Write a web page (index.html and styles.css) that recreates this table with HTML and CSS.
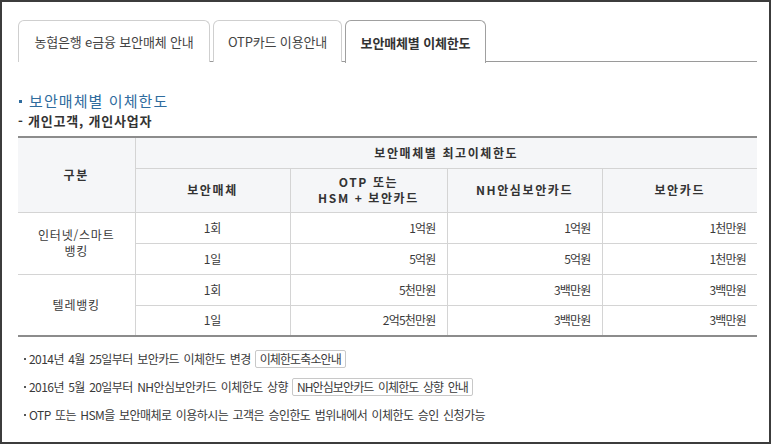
FILE: index.html
```html
<!DOCTYPE html>
<html lang="ko">
<head>
<meta charset="utf-8">
<title>보안매체별 이체한도</title>
<link rel="stylesheet" href="styles.css">
</head>
<body>
<div class="frame">
  <ul class="tabs">
    <li class="tab tab-1">농협은행 e금융 보안매체 안내</li>
    <li class="tab tab-2">OTP카드 이용안내</li>
    <li class="tab tab-3 active">보안매체별 이체한도</li>
  </ul>

  <h2 class="title"><span class="dot"></span>보안매체별 이체한도</h2>
  <p class="sub">- 개인고객, 개인사업자</p>

  <table class="limit">
    <colgroup>
      <col class="c1"><col class="c2"><col class="c3"><col class="c4"><col class="c5">
    </colgroup>
    <thead>
      <tr class="h1">
        <th rowspan="2">구분</th>
        <th colspan="4">보안매체별 최고이체한도</th>
      </tr>
      <tr class="h2">
        <th>보안매체</th>
        <th>OTP 또는<br>HSM + 보안카드</th>
        <th>NH안심보안카드</th>
        <th>보안카드</th>
      </tr>
    </thead>
    <tbody>
      <tr>
        <td rowspan="2" class="cat">인터넷/스마트<br>뱅킹</td>
        <td class="mid">1회</td><td class="num">1억원</td><td class="num">1억원</td><td class="num">1천만원</td>
      </tr>
      <tr>
        <td class="mid">1일</td><td class="num">5억원</td><td class="num">5억원</td><td class="num">1천만원</td>
      </tr>
      <tr>
        <td rowspan="2" class="cat">텔레뱅킹</td>
        <td class="mid">1회</td><td class="num">5천만원</td><td class="num">3백만원</td><td class="num">3백만원</td>
      </tr>
      <tr>
        <td class="mid">1일</td><td class="num">2억5천만원</td><td class="num">3백만원</td><td class="num">3백만원</td>
      </tr>
    </tbody>
  </table>

  <ul class="notes">
    <li>2014년 4월 25일부터 보안카드 이체한도 변경 <span class="btn">이체한도축소안내</span></li>
    <li>2016년 5월 20일부터 NH안심보안카드 이체한도 상향 <span class="btn">NH안심보안카드 이체한도 상향 안내</span></li>
    <li>OTP 또는 HSM을 보안매체로 이용하시는 고객은 승인한도 범위내에서 이체한도 승인 신청가능</li>
  </ul>
</div>
</body>
</html>
```

FILE: styles.css
```css
* { box-sizing: border-box; }
html, body { margin: 0; padding: 0; background: #fff; }
body {
  font-family: "Noto Sans CJK KR", "Noto Sans", sans-serif;
  color: #333;
  font-size: 12px;
}
.frame {
  width: 771px;
  height: 444px;
  border: 2px solid #3c3c3c;
  padding: 18px 12px 0 16px;
  overflow: hidden;
}
.tabs {
  list-style: none;
  margin: 0;
  padding: 0;
  display: flex;
  gap: 3px;
  border-bottom: 1px solid #9a9a9a;
  height: 42px;
}
.tab {
  height: 42px;
  border: 1px solid #cfcfcf;
  border-bottom: none;
  border-radius: 6px 6px 0 0;
  display: flex;
  align-items: center;
  justify-content: center;
  font-size: 13px;
  letter-spacing: -0.15px;
  color: #444;
  background: #fff;
}
.tab-1 { width: 192px; }
.tab-2 { width: 129px; }
.tab-3 { width: 141px; }
.tab.active {
  height: 43px;
  border-color: #a0a0a0;
  font-weight: bold;
  color: #333;
  position: relative;
  z-index: 1;
}
.title {
  margin: 29px 0 0 0;
  font-size: 15px;
  line-height: 20px;
  font-weight: normal;
  color: #2f6c9e;
  display: flex;
  align-items: center;
  letter-spacing: 1.1px;
}
.dot {
  width: 3px;
  height: 3px;
  background: #2f6c9e;
  margin: 0 7px 0 1px;
}
.sub {
  margin: 1px 0 0 0;
  font-size: 13px;
  line-height: 18px;
  font-weight: bold;
  color: #333;
  letter-spacing: 0.8px;
}
.limit {
  margin-top: 6px;
  width: 739px;
  border-collapse: collapse;
  table-layout: fixed;
  border-top: 2px solid #8c8c8c;
  border-bottom: 2px solid #8c8c8c;
}
.c1 { width: 117px; }
.c2 { width: 155px; }
.c3 { width: 157px; }
.c4 { width: 155px; }
.c5 { width: 155px; }
.limit th, .limit td {
  border: 1px solid #d4d4d4;
  padding: 0;
  line-height: 16px;
}
.limit tr > :first-child { border-left: none; }
.limit tr > :last-child { border-right: none; }
.limit .h2 > :first-child { border-left: 1px solid #d4d4d4; }
.limit th {
  background: #f5f6f8;
  font-weight: bold;
  font-size: 12px;
  letter-spacing: 1.6px;
  color: #333;
  text-align: center;
}
.h1 th { height: 31px; }
.h2 th { height: 44px; }
.limit td {
  height: 31px;
  font-size: 12px;
  letter-spacing: -0.8px;
  color: #3a3a3a;
}
.limit td.cat {
  text-align: center;
  border-left: none;
  letter-spacing: 0.8px;
}
.limit tbody tr:nth-child(2) > :first-child,
.limit tbody tr:nth-child(4) > :first-child { border-left: 1px solid #d4d4d4; }
.limit td.mid { text-align: center; letter-spacing: 0; }
.limit td.num { text-align: right; padding-right: 11px; }
.notes {
  list-style: none;
  margin: 13px 0 0 0;
  padding: 0 0 0 6px;
}
.notes li {
  height: 18px;
  line-height: 18px;
  margin-bottom: 10px;
  font-size: 12px;
  letter-spacing: -0.55px;
  word-spacing: 1.5px;
  color: #3a3a3a;
  display: flex;
  align-items: center;
}
.notes li::before {
  content: "";
  width: 2px;
  height: 2px;
  background: #555;
  margin-right: 3px;
}
.btn {
  display: inline-block;
  margin-left: 4px;
  height: 18px;
  line-height: 16px;
  padding: 0 4px;
  border: 1px solid #c8c8c8;
  border-radius: 2px;
  background: #fff;
  letter-spacing: -0.9px;
  word-spacing: 2px;
}
```
